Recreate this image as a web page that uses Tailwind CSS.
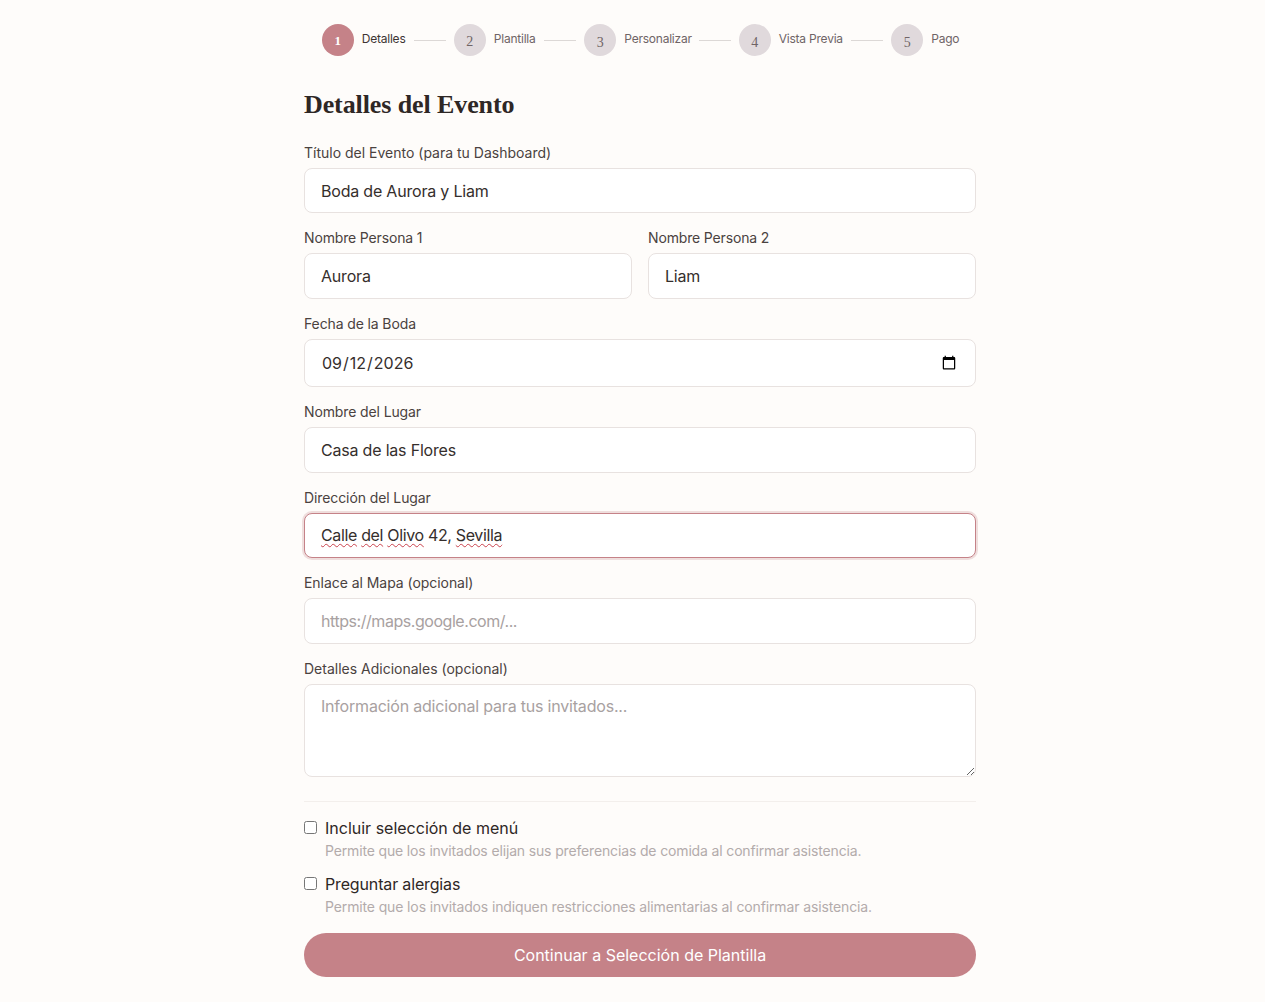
<!DOCTYPE html>
<html lang="es">
<head>
    <meta charset="UTF-8">
    <meta name="viewport" content="width=device-width, initial-scale=1.0">
    <title>Detalles del Evento</title>
    <script src="https://cdn.jsdelivr.net/npm/@tailwindcss/browser@4"></script>
</head>
<body class="min-h-screen bg-[#fefcfa] font-['Inter',sans-serif] text-[#2e2725]">
    <div class="w-[672px] ml-[304px] pt-6">
        <!-- stepper -->
        <div class="flex items-center justify-center text-[12px] tracking-[-0.22px] h-8 text-[#6f6466] whitespace-nowrap">
            <div class="w-8 h-8 rounded-full bg-[#c58288] text-white flex items-center justify-center font-['Liberation_Serif',serif] font-bold text-[13px] pt-0.5">1</div>
            <span class="ml-2 -mt-0.5 text-[#3d3533] w-[44px]">Detalles</span>
            <div class="ml-2 w-8 h-px bg-[#dcd8d6]"></div>
            <div class="ml-2 w-8 h-8 rounded-full bg-[#e0d9dc] flex items-center justify-center font-['Liberation_Serif',serif] text-[14px] pt-0.5">2</div>
            <span class="ml-2 -mt-0.5 w-[42.5px]">Plantilla</span>
            <div class="ml-2 w-8 h-px bg-[#dcd8d6]"></div>
            <div class="ml-2 w-8 h-8 rounded-full bg-[#e0d9dc] flex items-center justify-center font-['Liberation_Serif',serif] text-[14px] pt-1">3</div>
            <span class="ml-2 -mt-0.5 w-[66.5px]">Personalizar</span>
            <div class="ml-2 w-8 h-px bg-[#dcd8d6]"></div>
            <div class="ml-2 w-8 h-8 rounded-full bg-[#e0d9dc] flex items-center justify-center font-['Liberation_Serif',serif] text-[14px] pt-1">4</div>
            <span class="ml-2 -mt-0.5 w-[64.5px]">Vista Previa</span>
            <div class="ml-2 w-8 h-px bg-[#dcd8d6]"></div>
            <div class="ml-2 w-8 h-8 rounded-full bg-[#e0d9dc] flex items-center justify-center font-['Liberation_Serif',serif] text-[14px] pt-1">5</div>
            <span class="ml-2 -mt-0.5 w-[27px]">Pago</span>
        </div>

        <h1 class="mt-[31px] font-['Liberation_Serif',serif] font-bold text-[26px] tracking-[-0.1px] leading-9 text-[#2e2725]">Detalles del Evento</h1>

        <form class="mt-[20.8px]">
            <label class="block text-[14px] leading-[18px] pb-0.5 text-[#4a4240]">Título del Evento (para tu Dashboard)</label>
            <input type="text" value="Boda de Aurora y Liam" class="mt-1 w-full h-[45.6px] px-4 bg-white border border-[#e8e2e0] rounded-lg text-[16px] tracking-[-0.2px] outline-none text-[#352e2c]">

            <div class="mt-4 grid grid-cols-2 gap-4">
                <div>
                    <label class="block text-[14px] tracking-[-0.15px] leading-[18px] pb-0.5 text-[#4a4240]">Nombre Persona 1</label>
                    <input type="text" value="Aurora" class="mt-1 w-full h-[45.6px] px-4 bg-white border border-[#e8e2e0] rounded-lg text-[16px] tracking-[-0.2px] outline-none text-[#352e2c]">
                </div>
                <div>
                    <label class="block text-[14px] tracking-[-0.15px] leading-[18px] pb-0.5 text-[#4a4240]">Nombre Persona 2</label>
                    <input type="text" value="Liam" class="mt-1 w-full h-[45.6px] px-4 bg-white border border-[#e8e2e0] rounded-lg text-[16px] tracking-[-0.2px] outline-none text-[#352e2c]">
                </div>
            </div>

            <label class="mt-4 block text-[14px] tracking-[-0.12px] leading-[18px] pb-0.5 text-[#4a4240]">Fecha de la Boda</label>
            <input type="date" value="2026-09-12" class="mt-1 w-full h-12 px-4 bg-white border border-[#e8e2e0] rounded-lg text-[16px] outline-none text-[#352e2c]">

            <label class="mt-4 block text-[14px] tracking-[-0.12px] leading-[18px] pb-0.5 text-[#4a4240]">Nombre del Lugar</label>
            <input type="text" value="Casa de las Flores" class="mt-1 w-full h-[45.6px] px-4 bg-white border border-[#e8e2e0] rounded-lg text-[16px] tracking-[-0.2px] outline-none text-[#352e2c]">

            <label class="mt-4 block text-[14px] tracking-[-0.1px] leading-[18px] pb-0.5 text-[#4a4240]">Dirección del Lugar</label>
            <div class="mt-1 w-full h-[45.6px] px-4 flex items-center bg-white border border-[#c58288] ring-2 ring-[#c58288]/25 rounded-lg text-[16px] tracking-[-0.35px] text-[#352e2c]">
                <span class="whitespace-pre"><span class="underline decoration-wavy decoration-[#c9414c] decoration-1 underline-offset-2">Calle</span> <span class="underline decoration-wavy decoration-[#c9414c] decoration-1 underline-offset-2">del</span> <span class="underline decoration-wavy decoration-[#c9414c] decoration-1 underline-offset-2">Olivo</span> 42, <span class="underline decoration-wavy decoration-[#c9414c] decoration-1 underline-offset-2">Sevilla</span></span>
            </div>

            <label class="mt-4 block text-[14px] tracking-[-0.05px] leading-[18px] pb-0.5 text-[#4a4240]">Enlace al Mapa (opcional)</label>
            <input type="text" placeholder="https://maps.google.com/..." class="mt-1 w-full h-[45.6px] px-4 bg-white border border-[#e8e2e0] rounded-lg text-[16px] tracking-[-0.45px] outline-none placeholder:text-[#a8a1a1]">

            <label class="mt-4 block text-[14px] leading-[18px] pb-0.5 text-[#4a4240]">Detalles Adicionales (opcional)</label>
            <textarea placeholder="Información adicional para tus invitados..." class="mt-1 block w-full h-[93px] px-4 py-[9px] bg-white border border-[#e8e2e0] rounded-lg text-[16px] tracking-[-0.2px] outline-none placeholder:text-[#a8a1a1]"></textarea>

            <div class="mt-6 pt-4 border-t border-[#f3efec]">
                <div class="flex items-center h-5">
                    <input type="checkbox" class="w-[13px] h-[13px] rounded-sm">
                    <span class="ml-2 text-[16px] text-[#2e2725]">Incluir selección de menú</span>
                </div>
                <p class="ml-[21px] mt-[3px] text-[14px] tracking-[-0.15px] leading-5 text-[#b3abab]">Permite que los invitados elijan sus preferencias de comida al confirmar asistencia.</p>
                <div class="flex items-center h-5 mt-[13px]">
                    <input type="checkbox" class="w-[13px] h-[13px] rounded-sm">
                    <span class="ml-2 text-[16px] tracking-[-0.15px] text-[#2e2725]">Preguntar alergias</span>
                </div>
                <p class="ml-[21px] mt-[3px] text-[14px] tracking-[-0.13px] leading-5 text-[#b3abab]">Permite que los invitados indiquen restricciones alimentarias al confirmar asistencia.</p>
            </div>

            <button type="button" class="mt-4 w-full h-11 rounded-full bg-[#c58288] text-white text-[16px]">Continuar a Selección de Plantilla</button>
        </form>
    </div>
</body>
</html>
